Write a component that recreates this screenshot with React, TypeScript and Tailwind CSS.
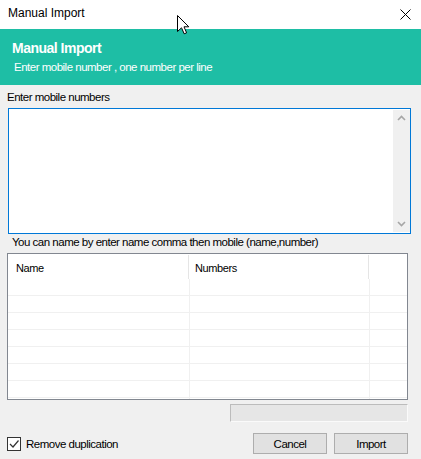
import React from "react";

const rows = [0, 1, 2, 3, 4, 5, 6];

export default function App() {
  return (
    <div className="relative w-[421px] h-[459px] bg-[#f0f0f0] overflow-hidden flex flex-col font-['Liberation_Sans',Arial,sans-serif] text-black">
      {/* Title bar */}
      <div className="h-[29px] bg-white flex items-start pt-[6px] pl-[8px]">
        <span className="text-[12px] leading-[14px]">Manual Import</span>
        <svg className="ml-auto mr-[10px] mt-[3px]" width="11" height="11" viewBox="0 0 11 11">
          <path d="M0.5 0.5 L10.5 10.5 M10.5 0.5 L0.5 10.5" stroke="#000" strokeWidth="1" fill="none" />
        </svg>
      </div>

      {/* Teal header */}
      <div className="h-[56px] bg-[#1ebea5] pt-[11px] pl-[12px] text-white">
        <div className="text-[14px] font-bold leading-[16px] tracking-[-0.5px]">Manual Import</div>
        <div className="mt-[4px] ml-[2px] text-[11.5px] tracking-[-0.5px] leading-[14px]">
          Enter mobile number , one number per line
        </div>
      </div>

      <div className="mt-[5px] ml-[7px] text-[11.5px] tracking-[-0.5px] leading-[14px]">Enter mobile numbers</div>

      {/* Textarea */}
      <div className="mt-[4px] ml-[8px] w-[403px] h-[126px] border border-[#0078d7] bg-white flex justify-end">
        <div className="w-[17px] my-[1px] bg-[#f0f0f0] flex flex-col justify-between items-center pt-[5px] pb-[5px]">
          <svg width="9" height="6" viewBox="0 0 9 6">
            <path d="M1 5 L4.5 1.5 L8 5" stroke="#a6a6a6" strokeWidth="1.6" fill="none" />
          </svg>
          <svg width="9" height="6" viewBox="0 0 9 6">
            <path d="M1 1 L4.5 4.5 L8 1" stroke="#a6a6a6" strokeWidth="1.6" fill="none" />
          </svg>
        </div>
      </div>

      <div className="mt-[1px] ml-[12px] text-[11.5px] tracking-[-0.5px] leading-[14px]">
        You can name by enter name comma then mobile (name,number)
      </div>

      {/* Table */}
      <div className="mt-[4px] ml-[7px] w-[401px] h-[147px] border border-[#828790] bg-white flex flex-col">
        <div className="h-[25px] flex shrink-0">
          <div className="w-[181px] mt-[1px] border-r border-[#e5e5e5] pl-[8px] pt-[7px] text-[11px] leading-[13px] tracking-[-0.4px]">
            Name
          </div>
          <div className="w-[180px] mt-[1px] border-r border-[#e5e5e5] pl-[6px] pt-[7px] text-[11px] leading-[13px] tracking-[-0.4px]">
            Numbers
          </div>
          <div className="flex-1" />
        </div>
        {rows.map((r) => (
          <div key={r} className="h-[17px] flex shrink-0 border-b border-[#f0f0f0]">
            <div className="w-[182px] border-r border-[#f0f0f0]" />
            <div className="w-[180px] border-r border-[#f0f0f0]" />
            <div className="flex-1" />
          </div>
        ))}
        <div className="flex-1 flex">
          <div className="w-[182px] border-r border-[#f0f0f0]" />
          <div className="w-[180px] border-r border-[#f0f0f0]" />
          <div className="flex-1" />
        </div>
      </div>

      {/* Progress bar */}
      <div className="mt-[4px] self-end mr-[13px] w-[178px] h-[18px] bg-[#e6e6e6] border border-t-[#bcbcbc] border-l-[#bcbcbc] border-r-[#fafafa] border-b-[#fafafa]" />

      {/* Bottom row */}
      <div className="mt-[11px] h-[21px] flex items-center">
        <div className="ml-[7px] flex items-center">
          <div className="w-[14px] h-[14px] border border-[#333333] bg-white flex items-center justify-center">
            <svg width="12" height="12" viewBox="0 0 12 12">
              <path d="M2 6 L5 9 L10.5 2.5" stroke="#333333" strokeWidth="1.2" fill="none" />
            </svg>
          </div>
          <span className="ml-[5px] text-[11.5px] tracking-[-0.5px] leading-[14px]">Remove duplication</span>
        </div>
        <div className="ml-auto mr-[13px] flex gap-[7px]">
          <div className="w-[74px] h-[21px] bg-[#e1e1e1] border border-[#adadad] flex items-center justify-center text-[11.5px] tracking-[-0.5px] leading-[14px]">
            Cancel
          </div>
          <div className="w-[74px] h-[21px] bg-[#e1e1e1] border border-[#adadad] flex items-center justify-center text-[11.5px] tracking-[-0.5px] leading-[14px]">
            Import
          </div>
        </div>
      </div>

      {/* Mouse cursor */}
      <svg className="absolute left-[177px] top-[15px]" width="13" height="20" viewBox="0 0 13 20">
        <path
          d="M0.5 0.5 L0.5 16.5 L4.5 12.8 L7.2 18.8 L9.6 17.8 L7 11.8 L11.8 11.8 Z"
          fill="#ffffff"
          stroke="#000000"
          strokeWidth="1"
          strokeLinejoin="miter"
        />
      </svg>
    </div>
  );
}
